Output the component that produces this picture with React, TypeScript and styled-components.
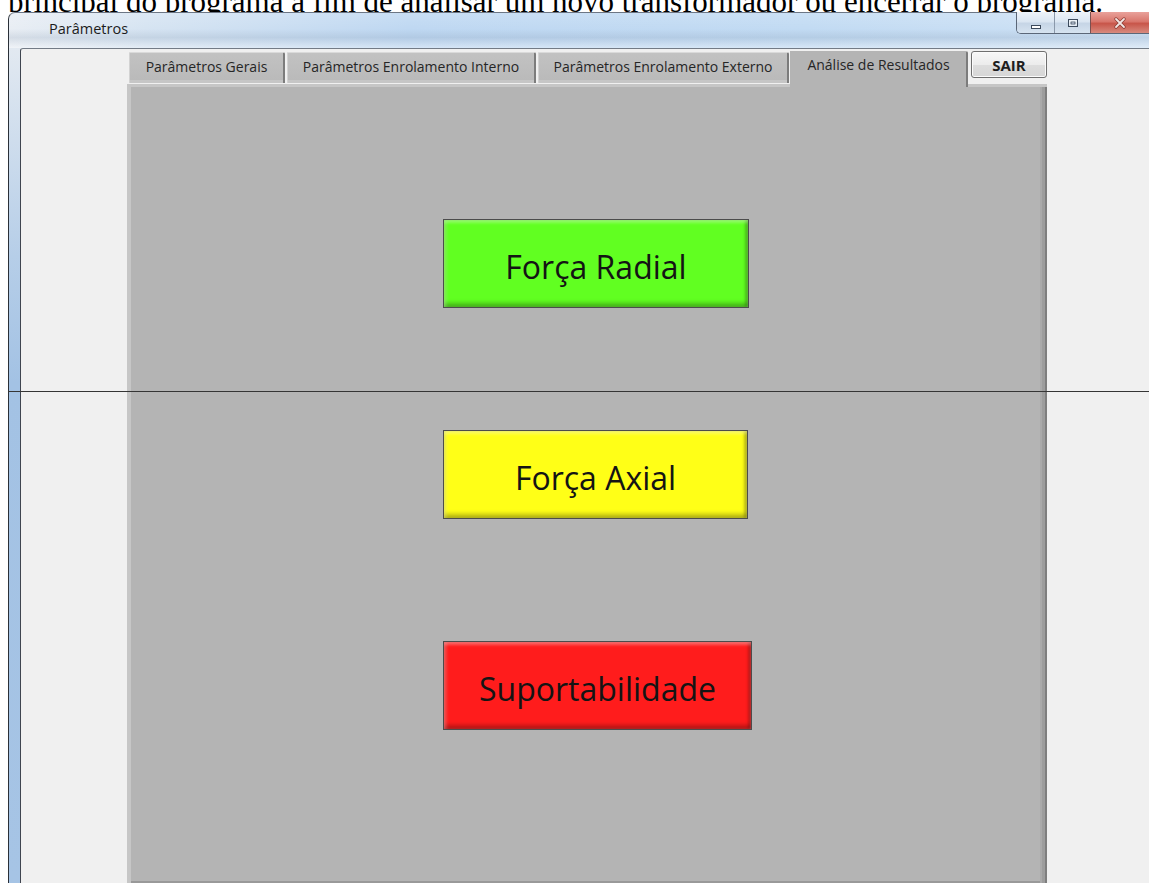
import React from 'react';
import styled, { createGlobalStyle } from 'styled-components';

const GlobalStyle = createGlobalStyle`
  html, body {
    margin: 0;
    padding: 0;
    background: #fff;
    overflow: hidden;
  }
`;

const Page = styled.div`
  position: relative;
  width: 1149px;
  height: 883px;
  overflow: hidden;
  background: #fff;
  display: flex;
  flex-direction: column;
`;

const Caption = styled.div`
  height: 12px;
  flex: none;
  overflow: hidden;
  padding-left: 8px;
  font-family: 'Liberation Serif', 'Times New Roman', serif;
  font-size: 31px;
  line-height: 31px;
  color: #000;
  white-space: nowrap;
`;

const CaptionText = styled.div`
  margin-top: -14px;
`;

const Window = styled.div`
  position: relative;
  flex: 1;
  margin-left: 8px;
  display: flex;
  flex-direction: column;
  border-left: 1px solid #2a3038;
  border-top: 1px solid #6c7684;
  border-top-left-radius: 7px;
  background: linear-gradient(90deg, #e9eef4 0%, #d6e4f2 12%, #bfd8f2 35%, #c2dbf3 70%, #cfe2f5 100%);
`;

const TitleBar = styled.div`
  height: 35px;
  flex: none;
  display: flex;
  align-items: flex-start;
  background: linear-gradient(180deg, rgba(255, 255, 255, 0.15) 0%, rgba(255, 255, 255, 0) 45%, rgba(120, 140, 165, 0.18) 70%, rgba(255, 255, 255, 0.35) 100%);
`;

const Title = styled.div`
  padding: 7px 0 0 40px;
  font-family: 'Open Sans', 'Noto Sans', sans-serif;
  font-size: 14.5px;
  line-height: 18px;
  color: #1c1c1c;
`;

const Controls = styled.div`
  margin-left: auto;
  margin-top: -1px;
  display: flex;
  height: 21px;
  border: 1px solid #5b6778;
  border-top: none;
  border-right: none;
  border-bottom-left-radius: 5px;
  overflow: hidden;
`;

const ControlButton = styled.div<{ $w: number; $close?: boolean }>`
  width: ${p => p.$w}px;
  display: flex;
  align-items: center;
  justify-content: center;
  border-left: ${p => (p.$close ? '1px solid #7a5050' : '1px solid #8a98aa')};
  background: ${p =>
    p.$close
      ? 'linear-gradient(180deg, #e9a29b 0%, #d9776d 45%, #c8564a 55%, #d88a7e 100%)'
      : 'linear-gradient(180deg, #eef3f9 0%, #dbe6f2 45%, #c6d5e6 55%, #d6e3f0 100%)'};
  &:first-child {
    border-left: none;
  }
`;

const FrameBody = styled.div`
  flex: 1;
  display: flex;
`;

const FrameEdge = styled.div`
  width: 11px;
  flex: none;
  background: linear-gradient(180deg, #e2e9f1 0%, #b6cee8 25%, #a3c2e4 40%, #a6c4e5 100%);
`;

const Content = styled.div`
  flex: 1;
  display: flex;
  flex-direction: column;
  padding: 2px 0 0 106px;
  background: #f0f0f0;
  border-left: 1px solid #3f4550;
  border-top: 1px solid #737b86;
  border-top-left-radius: 3px;
`;

const TabRow = styled.div`
  display: flex;
  align-items: flex-start;
  height: 33px;
  flex: none;
  position: relative;
  z-index: 1;
`;

const Tab = styled.div<{ $w: number; $active?: boolean }>`
  width: ${p => p.$w}px;
  box-sizing: border-box;
  height: ${p => (p.$active ? '36px' : '31px')};
  margin: ${p => (p.$active ? '0 0 0 1px' : '1px 0 0 2px')};
  padding-top: ${p => (p.$active ? '5px' : '6px')};
  display: flex;
  justify-content: center;
  align-items: flex-start;
  background: ${p => (p.$active ? '#b4b4b4' : 'linear-gradient(180deg, #c2c2c2 0%, #b9b9b9 100%)')};
  border-top: 1px solid ${p => (p.$active ? '#b4b4b4' : '#dadada')};
  border-left: 1px solid ${p => (p.$active ? '#b4b4b4' : '#d2d2d2')};
  border-right: 2px solid #7c7c7c;
  border-top-right-radius: 2px;
  box-shadow: ${p => (p.$active ? 'none' : 'inset 0 -3px 0 #c6c6c6')};
  font-family: 'Open Sans', 'Noto Sans', sans-serif;
  font-size: 14px;
  line-height: 16px;
  color: #262626;
  white-space: nowrap;
  &:first-child {
    margin-left: 2px;
  }
`;

const ExitButton = styled.div`
  width: 76px;
  height: 27px;
  box-sizing: border-box;
  margin-left: 3px;
  display: flex;
  align-items: center;
  justify-content: center;
  border: 1px solid #6f6f6f;
  border-radius: 3px;
  background: linear-gradient(180deg, #f7f7f7 0%, #ececec 50%, #dddddd 51%, #d6d6d6 100%);
  box-shadow: inset 0 0 0 1px #fbfbfb;
  font-family: 'Open Sans', 'Noto Sans', sans-serif;
  font-weight: 700;
  font-size: 15px;
  color: #1e1e1e;
`;

const Panel = styled.div`
  flex: 1;
  width: 920px;
  box-sizing: border-box;
  display: flex;
  flex-direction: column;
  gap: 122px;
  padding: 135px 0 0 316px;
  background: #b4b4b4;
  box-shadow: inset 4px 3px 0 #c6c6c6, inset -2px 0 0 #7e7e7e, inset -5px 0 0 #9d9d9d, inset -7px 0 0 #aaaaaa, inset 0 -2px 0 #999;
`;

const ActionButton = styled.div<{ $color: string; $w: number }>`
  width: ${p => p.$w}px;
  height: 89px;
  box-sizing: border-box;
  display: flex;
  align-items: center;
  justify-content: center;
  padding-top: 6px;
  border: 1px solid #4c4c4c;
  background: ${p => p.$color};
  box-shadow: inset 0 3px 3px rgba(255, 255, 255, 0.3), inset 3px 0 3px rgba(255, 255, 255, 0.18),
    inset -3px 0 3px rgba(0, 0, 0, 0.22), inset 0 -4px 4px rgba(0, 0, 0, 0.28);
  font-family: 'Open Sans', 'Noto Sans', sans-serif;
  font-size: 32px;
  color: #141414;
`;

const Divider = styled.div`
  position: absolute;
  top: 391px;
  left: 8px;
  right: 0;
  height: 1px;
  background: #353535;
  z-index: 5;
`;

const MinIcon = () => (
  <svg width="12" height="14" viewBox="0 0 12 14">
    <rect x="1.5" y="9.5" width="9" height="3" fill="#fff" stroke="#3c4a5c" />
  </svg>
);

const MaxIcon = () => (
  <svg width="12" height="12" viewBox="0 0 12 12">
    <rect x="1.5" y="2.5" width="9" height="7" fill="none" stroke="#3c4a5c" />
    <rect x="3" y="4" width="6" height="4" fill="none" stroke="#fff" strokeWidth="1" />
    <rect x="4" y="5" width="4" height="2" fill="#d8e2ee" stroke="#3c4a5c" strokeWidth="0.8" />
  </svg>
);

const CloseIcon = () => (
  <svg width="12" height="12" viewBox="0 0 12 12">
    <path d="M2 2 L10 10 M10 2 L2 10" stroke="#8a3a32" strokeWidth="3.2" strokeLinecap="round" />
    <path d="M2 2 L10 10 M10 2 L2 10" stroke="#f3e6e4" strokeWidth="1.8" strokeLinecap="round" />
  </svg>
);

const tabs = [
  { label: 'Parâmetros Gerais', w: 156 },
  { label: 'Parâmetros Enrolamento Interno', w: 249 },
  { label: 'Parâmetros Enrolamento Externo', w: 251 },
];

const actions = [
  { label: 'Força Radial', color: '#61ff21', w: 306 },
  { label: 'Força Axial', color: '#ffff17', w: 305 },
  { label: 'Suportabilidade', color: '#ff1c1c', w: 309 },
];

const App: React.FC = () => {
  return (
    <>
      <GlobalStyle />
      <Page>
        <Caption>
          <CaptionText>
            principal do programa a fim de analisar um novo transformador ou encerrar o programa.
          </CaptionText>
        </Caption>
        <Window>
          <TitleBar>
            <Title>Parâmetros</Title>
            <Controls>
              <ControlButton $w={37}>
                <MinIcon />
              </ControlButton>
              <ControlButton $w={35}>
                <MaxIcon />
              </ControlButton>
              <ControlButton $w={58} $close>
                <CloseIcon />
              </ControlButton>
            </Controls>
          </TitleBar>
          <FrameBody>
            <FrameEdge />
            <Content>
              <TabRow>
                {tabs.map(t => (
                  <Tab key={t.label} $w={t.w}>
                    {t.label}
                  </Tab>
                ))}
                <Tab $w={178} $active>
                  Análise de Resultados
                </Tab>
                <ExitButton>SAIR</ExitButton>
              </TabRow>
              <Panel>
                {actions.map(a => (
                  <ActionButton key={a.label} $color={a.color} $w={a.w}>
                    {a.label}
                  </ActionButton>
                ))}
              </Panel>
            </Content>
          </FrameBody>
        </Window>
        <Divider />
      </Page>
    </>
  );
};

export default App;
